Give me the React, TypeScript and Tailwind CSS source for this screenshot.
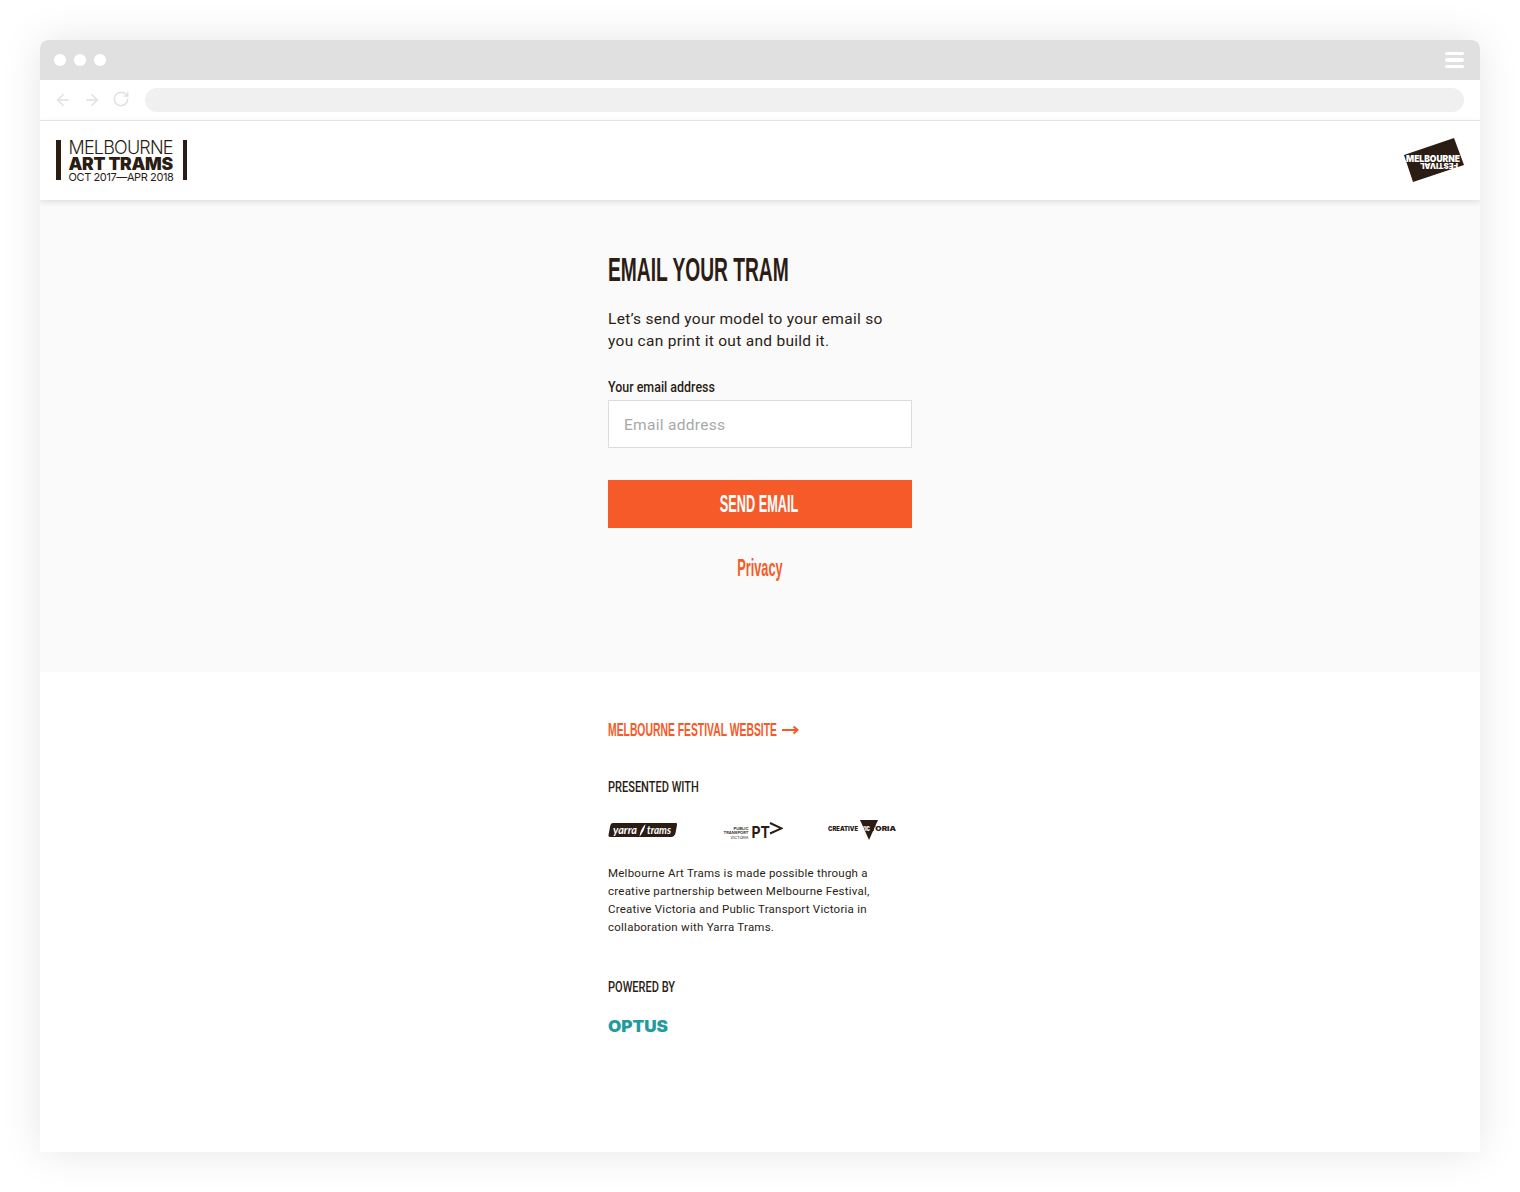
import { ArrowLeft, ArrowRight, RotateCw } from "lucide-react";

const Bar = () => <div className="w-[4.5px] h-10 bg-[#2b1d14]" />;

function WindowTop() {
  return (
    <>
      <div className="h-10 bg-[#e1e0e1] rounded-t-lg flex items-center justify-between pl-3.5 pr-4">
        <div className="flex gap-2">
          <span className="w-3 h-3 rounded-full bg-white" />
          <span className="w-3 h-3 rounded-full bg-white" />
          <span className="w-3 h-3 rounded-full bg-white" />
        </div>
        <div className="flex flex-col gap-[3px] w-[19px]">
          <span className="h-[3.5px] rounded-sm bg-white" />
          <span className="h-[3.5px] rounded-sm bg-white" />
          <span className="h-[3.5px] rounded-sm bg-white" />
        </div>
      </div>
      <div className="h-[41px] bg-white border-b border-[#e8e8e8] flex items-center pl-3.5 pr-4">
        <ArrowLeft size={18} strokeWidth={2} className="text-[#e1e0e1]" />
        <ArrowRight size={18} strokeWidth={2} className="text-[#e1e0e1] ml-[11px]" />
        <RotateCw size={18} strokeWidth={2} className="text-[#e1e0e1] ml-[11px] -mt-0.5" />
        <div className="ml-[15px] flex-1 h-6 rounded-full bg-[#f0f0f0]" />
      </div>
    </>
  );
}

function Header() {
  return (
    <header className="relative z-10 h-[79px] bg-white shadow-[0_2px_6px_rgba(0,0,0,0.12)] flex items-center justify-between pl-4 pr-4">
      <div className="flex items-center mb-px text-[#2b1d14] font-['Inter',sans-serif]">
        <Bar />
        <div className="w-[104px] ml-2 mr-2.5 flex flex-col items-start h-10 whitespace-nowrap">
          <span className="h-[15px] leading-[15px] text-[18px] font-light tracking-[-0.8px]">MELBOURNE</span>
          <span className="h-[17px] leading-[17px] text-[17.5px] font-black tracking-[-0.3px]">ART TRAMS</span>
          <span className="h-2 leading-[10px] text-[11px] tracking-[-0.4px]">OCT 2017—APR 2018</span>
        </div>
        <Bar />
      </div>
      <svg width="60" height="44" viewBox="0 0 60 44" className="overflow-visible mb-px">
        <polygon points="50,0 60,27 9,44 0,17" fill="#2b1d14" />
        <text x="2" y="24" fill="#fff" fontFamily="Inter, sans-serif" fontWeight="900" fontSize="9.5" textLength="54" lengthAdjust="spacingAndGlyphs">MELBOURNE</text>
        <text x="0" y="0" fill="#fff" fontFamily="Inter, sans-serif" fontWeight="900" fontSize="8" textLength="38" lengthAdjust="spacingAndGlyphs" transform="translate(54 24.5) rotate(180)">FESTIVAL</text>
      </svg>
    </header>
  );
}

function Condensed({ children, center, scale }: { children: string; center?: boolean; scale: string }) {
  return <span className={`inline-block whitespace-nowrap ${center ? "origin-center" : "origin-left"} ${scale}`}>{children}</span>;
}

function Main() {
  return (
    <main className="bg-[#fafafa] pt-[50px] pb-[88px] text-[#2b1d14]">
      <div className="w-[304px] mx-auto flex flex-col font-['Roboto',sans-serif]">
        <h1 className="h-10 leading-[39px] text-[34px] font-bold font-['Liberation_Sans',sans-serif] whitespace-nowrap">
          <Condensed scale="scale-x-[0.565]">EMAIL YOUR TRAM</Condensed>
        </h1>
        <p className="mt-[18px] text-[15.5px] leading-[22px] tracking-[0.29px]">
          Let’s send your model to your email so<br />you can print it out and build it.
        </p>
        <label className="mt-[25px] h-5 leading-5 text-[15px] font-medium whitespace-nowrap">
          <Condensed scale="scale-x-[0.83]">Your email address</Condensed>
        </label>
        <input
          placeholder="Email address"
          className="mt-[3px] h-12 w-full bg-white border border-[#dcdcdc] pl-[15px] pr-4 pt-px text-[15.5px] tracking-[0.3px] outline-none placeholder:text-[#a8a8a8]"
        />
        <button className="mt-8 h-12 leading-[46px] pr-0.5 bg-[#f55a28] text-white text-[24px] font-bold font-['Liberation_Sans',sans-serif]">
          <Condensed center scale="scale-x-[0.53]">SEND EMAIL</Condensed>
        </button>
        <a className="mt-6 h-8 leading-8 text-center text-[#f55a28] text-[23px] font-bold font-['Liberation_Sans',sans-serif]">
          <Condensed center scale="scale-x-[0.555]">Privacy</Condensed>
        </a>
      </div>
    </main>
  );
}

function Logos() {
  return (
    <div className="mt-[17px] h-7 flex items-center text-[#2b1d14]">
      <svg width="70" height="16" viewBox="0 0 70 16">
        <path d="M5 1 H68 Q69.5 1 69 3 L67.5 11 Q66.5 15 63 15 H2 Q0 15 0.5 13 L2 5 Q2.5 1 5 1Z" fill="#2b1d14" />
        <path d="M37.5 2 Q32 8 31.5 14.5 Q36.5 9 37.5 2Z" fill="#fff" />
        <text x="5" y="12" fill="#fff" fontFamily="Lato, sans-serif" fontStyle="italic" fontWeight="700" fontSize="12" textLength="24" lengthAdjust="spacingAndGlyphs">yarra</text>
        <text x="39" y="12" fill="#fff" fontFamily="Lato, sans-serif" fontStyle="italic" fontWeight="700" fontSize="12" textLength="24" lengthAdjust="spacingAndGlyphs">trams</text>
      </svg>
      <svg width="60" height="20" viewBox="0 0 60 20" className="ml-[45px]">
        <g fontFamily="Inter, sans-serif" fontSize="4" fontWeight="600" fill="#2b1d14" textAnchor="end">
          <text x="25.5" y="10.3" textLength="15" lengthAdjust="spacingAndGlyphs">PUBLIC</text>
          <text x="25.5" y="14.3" textLength="25" lengthAdjust="spacingAndGlyphs">TRANSPORT</text>
          <text x="25.5" y="18.5" textLength="18" lengthAdjust="spacingAndGlyphs" fontWeight="400">VICTORIA</text>
        </g>
        <text x="28.5" y="18.3" fill="#2b1d14" fontFamily="Inter, sans-serif" fontSize="16" fontWeight="700" textLength="18.5" lengthAdjust="spacingAndGlyphs">PT</text>
        <path d="M47 3 L58.5 8.3 L47 13.5" fill="none" stroke="#2b1d14" strokeWidth="2" />
      </svg>
      <svg width="68" height="22" viewBox="0 0 68 22" className="ml-[45px]">
        <polygon points="32,1 50,1 41,21" fill="#2b1d14" />
        <text x="0" y="11.7" fill="#2b1d14" fontFamily="Inter, sans-serif" fontWeight="900" fontSize="6.8" textLength="30" lengthAdjust="spacingAndGlyphs">CREATIVE</text>
        <text x="33" y="11.7" fill="#fff" fontFamily="Inter, sans-serif" fontWeight="900" fontSize="6.8" textLength="9" lengthAdjust="spacingAndGlyphs">VIC</text>
        <text x="42" y="11.7" fill="#2b1d14" fontFamily="Inter, sans-serif" fontWeight="900" fontSize="6.8" textLength="26" lengthAdjust="spacingAndGlyphs">TORIA</text>
      </svg>
    </div>
  );
}

function Footer() {
  return (
    <footer className="bg-white pt-[46px] pb-[114px] text-[#2b1d14]">
      <div className="w-[304px] mx-auto flex flex-col font-['Roboto',sans-serif]">
        <a className="h-6 leading-6 flex items-center text-[#f55a28] text-[18px] font-bold font-['Liberation_Sans',sans-serif] relative">
          <Condensed scale="scale-x-[0.576]">MELBOURNE FESTIVAL WEBSITE</Condensed>
          <svg width="17" height="10" viewBox="0 0 17 10" className="absolute left-[174px] top-[7px]">
            <path d="M0 5 H15 M11.5 1.5 L15.5 5 L11.5 8.5" fill="none" stroke="#f55a28" strokeWidth="2" />
          </svg>
        </a>
        <div className="mt-[33px] h-6 leading-6 text-[15px] font-medium font-['Roboto',sans-serif]">
          <Condensed scale="scale-x-[0.735]">PRESENTED WITH</Condensed>
        </div>
        <Logos />
        <p className="mt-5 text-[11.5px] leading-[18px] tracking-[0.24px] whitespace-nowrap">
          Melbourne Art Trams is made possible through a<br />
          creative partnership between Melbourne Festival,<br />
          Creative Victoria and Public Transport Victoria in<br />
          collaboration with Yarra Trams.
        </p>
        <div className="mt-[39px] h-6 leading-6 text-[15px] font-medium">
          <Condensed scale="scale-x-[0.735]">POWERED BY</Condensed>
        </div>
        <div className="mt-[15px] h-6 leading-6 text-[16px] font-black text-[#1f9c9c] font-['Inter',sans-serif]">
          <Condensed scale="scale-x-[1.07]">OPTUS</Condensed>
        </div>
      </div>
    </footer>
  );
}

export default function App() {
  return (
    <div className="h-[1192px] bg-white p-10">
      <div className="rounded-t-lg shadow-[0_0_40px_rgba(0,0,0,0.1)] overflow-hidden">
        <WindowTop />
        <Header />
        <Main />
        <Footer />
      </div>
    </div>
  );
}
